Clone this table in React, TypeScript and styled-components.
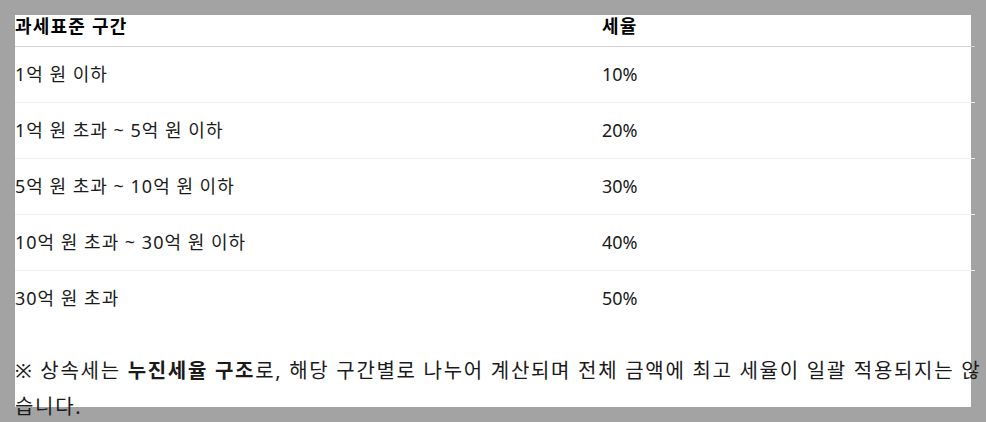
import React from "react";
import styled, { createGlobalStyle } from "styled-components";

const GlobalStyle = createGlobalStyle`
  html, body {
    margin: 0;
    padding: 0;
    background: #a3a3a3;
    overflow: hidden;
  }
  #root {
    padding: 15px;
  }
`;

const Sheet = styled.div`
  width: 956px;
  height: 392px;
  background: #ffffff;
  font-family: "Noto Sans", "Noto Sans CJK KR", sans-serif;
  color: #1a1a1a;
`;

const RateTable = styled.table`
  width: 960px;
  border-collapse: collapse;
  table-layout: fixed;
  font-size: 18px;
`;

const HeadCell = styled.th<{ $width?: number }>`
  width: ${(p) => (p.$width ? `${p.$width}px` : "auto")};
  text-align: left;
  font-weight: 700;
  color: #000;
  line-height: 22px;
  letter-spacing: 1.2px;
  padding: 0 0 9px 0;
  border-bottom: 1px solid #d4d4d4;
`;

const Row = styled.tr`
  &:last-child td {
    border-bottom: none;
  }
`;

const Cell = styled.td<{ $tight?: boolean }>`
  text-align: left;
  line-height: 23px;
  letter-spacing: ${(p) => (p.$tight ? "0" : "1px")};
  padding: 16px 0;
  border-bottom: 1px solid #eeeeee;
`;

const Note = styled.p`
  margin: 27px 0 0 0;
  width: 1100px;
  font-size: 20px;
  line-height: 36px;
  letter-spacing: 1.7px;
  white-space: nowrap;
`;

const brackets = [
  { range: "1억 원 이하", rate: "10%" },
  { range: "1억 원 초과 ~ 5억 원 이하", rate: "20%" },
  { range: "5억 원 초과 ~ 10억 원 이하", rate: "30%" },
  { range: "10억 원 초과 ~ 30억 원 이하", rate: "40%" },
  { range: "30억 원 초과", rate: "50%" },
];

const App = () => {
  return (
    <>
      <GlobalStyle />
      <Sheet>
        {/* 상속세 세율표 */}
        <RateTable>
          <thead>
            <tr>
              <HeadCell $width={587}>과세표준 구간</HeadCell>
              <HeadCell>세율</HeadCell>
            </tr>
          </thead>
          <tbody>
            {brackets.map((b) => (
              <Row key={b.range}>
                <Cell>{b.range}</Cell>
                <Cell $tight>{b.rate}</Cell>
              </Row>
            ))}
          </tbody>
        </RateTable>

        <Note>
          ※ 상속세는 <strong>누진세율 구조</strong>로, 해당 구간별로 나누어
          계산되며 전체 금액에 최고 세율이 일괄 적용되지는 않
          <br />
          습니다.
        </Note>
      </Sheet>
    </>
  );
};

export default App;
